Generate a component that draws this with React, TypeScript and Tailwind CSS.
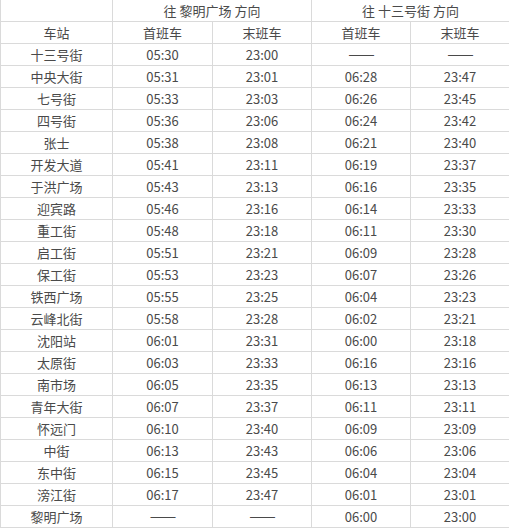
import React from "react";

const rows: string[][] = [
  ["十三号街", "05:30", "23:00", "——", "——"],
  ["中央大街", "05:31", "23:01", "06:28", "23:47"],
  ["七号街", "05:33", "23:03", "06:26", "23:45"],
  ["四号街", "05:36", "23:06", "06:24", "23:42"],
  ["张士", "05:38", "23:08", "06:21", "23:40"],
  ["开发大道", "05:41", "23:11", "06:19", "23:37"],
  ["于洪广场", "05:43", "23:13", "06:16", "23:35"],
  ["迎宾路", "05:46", "23:16", "06:14", "23:33"],
  ["重工街", "05:48", "23:18", "06:11", "23:30"],
  ["启工街", "05:51", "23:21", "06:09", "23:28"],
  ["保工街", "05:53", "23:23", "06:07", "23:26"],
  ["铁西广场", "05:55", "23:25", "06:04", "23:23"],
  ["云峰北街", "05:58", "23:28", "06:02", "23:21"],
  ["沈阳站", "06:01", "23:31", "06:00", "23:18"],
  ["太原街", "06:03", "23:33", "06:16", "23:16"],
  ["南市场", "06:05", "23:35", "06:13", "23:13"],
  ["青年大街", "06:07", "23:37", "06:11", "23:11"],
  ["怀远门", "06:10", "23:40", "06:09", "23:09"],
  ["中街", "06:13", "23:43", "06:06", "23:06"],
  ["东中街", "06:15", "23:45", "06:04", "23:04"],
  ["滂江街", "06:17", "23:47", "06:01", "23:01"],
  ["黎明广场", "——", "——", "06:00", "23:00"],
];

const cell =
  "h-[22px] flex items-center justify-center border-r border-b border-[#dadada]";

export default function App() {
  return (
    <div
      className="w-[509px] h-[529px] overflow-hidden bg-white text-[13px] text-[#4a4a4a]"
      style={{ fontFamily: '"Noto Sans CJK SC", "Noto Sans", sans-serif' }}
    >
      <div className="grid grid-cols-[112px_100px_99px_99px_99px] w-[510px] border-l border-[#dadada]">
        <div className={cell}></div>
        <div className={`${cell} col-span-2`}>往 黎明广场 方向</div>
        <div className={`${cell} col-span-2`}>往 十三号街 方向</div>
        <div className={cell}>车站</div>
        <div className={cell}>首班车</div>
        <div className={cell}>末班车</div>
        <div className={cell}>首班车</div>
        <div className={cell}>末班车</div>
        {rows.map((r, i) =>
          r.map((c, j) => (
            <div key={`${i}-${j}`} className={cell}>
              {c === "——" ? (
                <span className="font-['Liberation_Sans'] tracking-[-1px]">
                  {c}
                </span>
              ) : (
                c
              )}
            </div>
          ))
        )}
      </div>
    </div>
  );
}
